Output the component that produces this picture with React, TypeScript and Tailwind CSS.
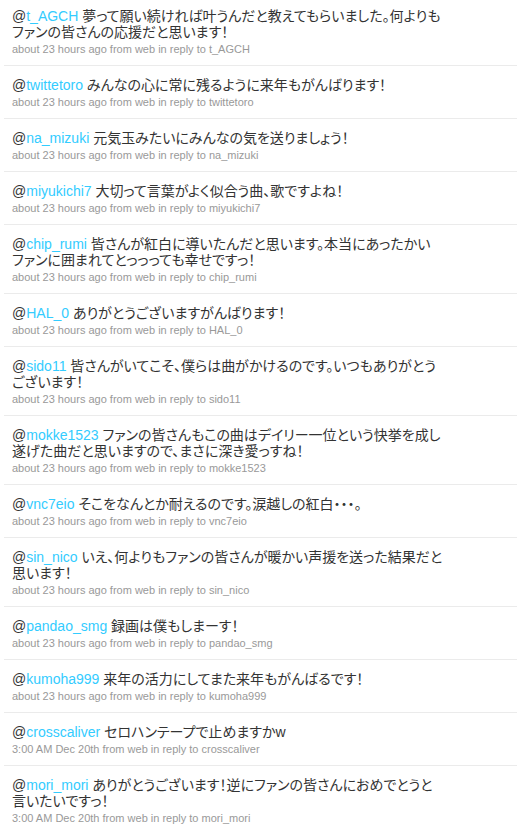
const tweets = [
  { user: 't_AGCH', lines: ['夢って願い続ければ叶うんだと教えてもらいました。何よりも', 'ファンの皆さんの応援だと思います！'], time: 'about 23 hours ago' },
  { user: 'twittetoro', lines: ['みんなの心に常に残るように来年もがんばります！'], time: 'about 23 hours ago' },
  { user: 'na_mizuki', lines: ['元気玉みたいにみんなの気を送りましょう！'], time: 'about 23 hours ago' },
  { user: 'miyukichi7', lines: ['大切って言葉がよく似合う曲、歌ですよね！'], time: 'about 23 hours ago' },
  { user: 'chip_rumi', lines: ['皆さんが紅白に導いたんだと思います。本当にあったかい', 'ファンに囲まれてとっっっても幸せですっ！'], time: 'about 23 hours ago' },
  { user: 'HAL_0', lines: ['ありがとうございますがんばります！'], time: 'about 23 hours ago' },
  { user: 'sido11', lines: ['皆さんがいてこそ、僕らは曲がかけるのです。いつもありがとう', 'ございます！'], time: 'about 23 hours ago' },
  { user: 'mokke1523', lines: ['ファンの皆さんもこの曲はデイリー一位という快挙を成し', '遂げた曲だと思いますので、まさに深き愛っすね！'], time: 'about 23 hours ago' },
  { user: 'vnc7eio', lines: ['そこをなんとか耐えるのです。涙越しの紅白・・・。'], time: 'about 23 hours ago' },
  { user: 'sin_nico', lines: ['いえ、何よりもファンの皆さんが暖かい声援を送った結果だと', '思います！'], time: 'about 23 hours ago' },
  { user: 'pandao_smg', lines: ['録画は僕もしまーす！'], time: 'about 23 hours ago' },
  { user: 'kumoha999', lines: ['来年の活力にしてまた来年もがんばるです！'], time: 'about 23 hours ago' },
  { user: 'crosscaliver', lines: ['セロハンテープで止めますかw'], time: '3:00 AM Dec 20th' },
  { user: 'mori_mori', lines: ['ありがとうございます！逆にファンの皆さんにおめでとうと', '言いたいですっ！'], time: '3:00 AM Dec 20th' },
];

export default function App() {
  return (
    <div className="h-[833px] overflow-hidden bg-white font-['Liberation_Sans','Noto_Sans_CJK_JP',sans-serif]">
      <ul className="-mt-[3px] ml-[4px] mr-[1px]">
        {tweets.map((t) => (
          <li key={t.user} className="border-b border-[#ebebeb] pl-[8px] pt-[11px] pb-[8px]">
            {/* Tweet body */}
            <div className="text-[14px] leading-[16px] text-[#333] whitespace-nowrap [font-feature-settings:'palt']">
              {t.lines.map((line, i) => (
                <div key={i}>
                  {i === 0 && (
                    <>
                      @<span className="text-[#33ccff]">{t.user}</span>{' '}
                    </>
                  )}
                  {line}
                </div>
              ))}
            </div>

            {/* Meta */}
            <div className="mt-[1px] text-[11px] leading-[16px] text-[#999]">
              {t.time} from web in reply to {t.user}
            </div>
          </li>
        ))}
      </ul>
    </div>
  );
}
